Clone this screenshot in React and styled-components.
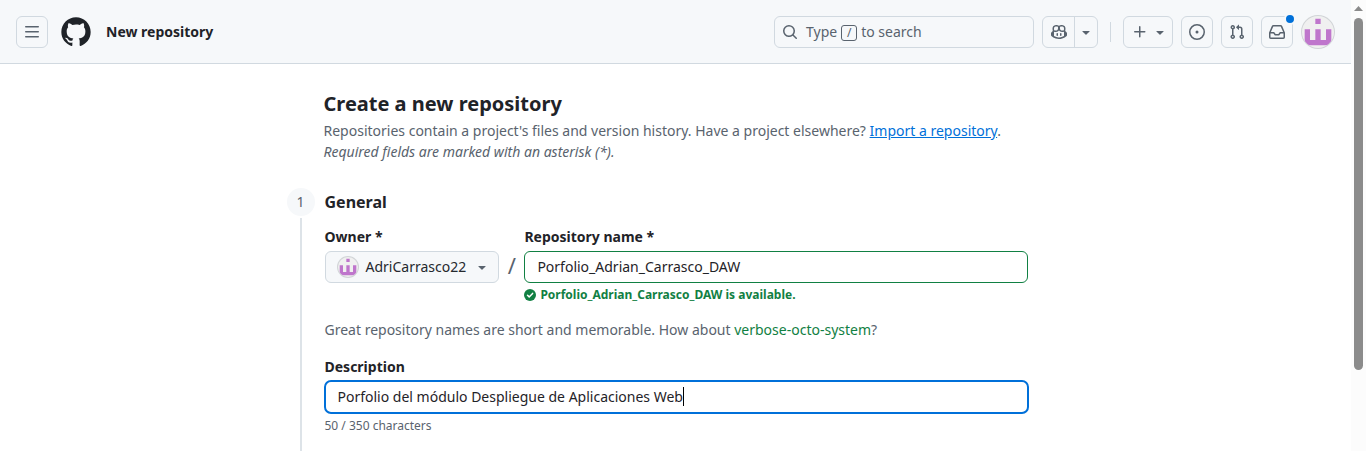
import React from 'react';
import styled, { createGlobalStyle, css } from 'styled-components';

const GlobalStyle = createGlobalStyle`
  *, *::before, *::after { box-sizing: border-box; }
  html, body { margin: 0; height: 451px; overflow: hidden; background: #fff; }
  body {
    font-family: "Noto Sans", sans-serif;
    font-size: 14px;
    line-height: 21px;
    color: #1f2328;
  }
  h1, h2, p { margin: 0; }
  svg { display: block; flex: none; }
`;

const ICONS = {
  menu: 'M1 2.75A.75.75 0 0 1 1.75 2h12.5a.75.75 0 0 1 0 1.5H1.75A.75.75 0 0 1 1 2.75Zm0 5A.75.75 0 0 1 1.75 7h12.5a.75.75 0 0 1 0 1.5H1.75A.75.75 0 0 1 1 7.75ZM1.75 12h12.5a.75.75 0 0 1 0 1.5H1.75a.75.75 0 0 1 0-1.5Z',
  search: 'M10.68 11.74a6 6 0 0 1-7.922-8.982 6 6 0 0 1 8.982 7.922l3.04 3.04a.749.749 0 0 1-.326 1.275.749.749 0 0 1-.734-.215ZM11.5 7a4.499 4.499 0 1 0-8.997 0A4.499 4.499 0 0 0 11.5 7Z',
  caret: 'm4.427 7.427 3.396 3.396a.25.25 0 0 0 .354 0l3.396-3.396A.25.25 0 0 0 11.396 7H4.604a.25.25 0 0 0-.177.427Z',
  plus: 'M7.75 2a.75.75 0 0 1 .75.75V7h4.25a.75.75 0 0 1 0 1.5H8.5v4.25a.75.75 0 0 1-1.5 0V8.5H2.75a.75.75 0 0 1 0-1.5H7V2.75A.75.75 0 0 1 7.75 2Z',
  issue: 'M8 9.5a1.5 1.5 0 1 0 0-3 1.5 1.5 0 0 0 0 3ZM8 0a8 8 0 1 1 0 16A8 8 0 0 1 8 0ZM1.5 8a6.5 6.5 0 1 0 13 0 6.5 6.5 0 0 0-13 0Z',
  pull: 'M1.5 3.25a2.25 2.25 0 1 1 3 2.122v5.256a2.251 2.251 0 1 1-1.5 0V5.372A2.25 2.25 0 0 1 1.5 3.25Zm5.677-.177L9.573.677A.25.25 0 0 1 10 .854V2.5h1A2.5 2.5 0 0 1 13.5 5v5.628a2.251 2.251 0 1 1-1.5 0V5a1 1 0 0 0-1-1h-1v1.646a.25.25 0 0 1-.427.177L7.177 3.427a.25.25 0 0 1 0-.354ZM3.75 2.5a.75.75 0 1 0 0 1.5.75.75 0 0 0 0-1.5Zm0 9.5a.75.75 0 1 0 0 1.5.75.75 0 0 0 0-1.5Zm8.25.75a.75.75 0 1 0 1.5 0 .75.75 0 0 0-1.5 0Z',
  inbox: 'M2.8 2.06A1.75 1.75 0 0 1 4.41 1h7.18c.7 0 1.333.417 1.61 1.06l2.74 6.395c.04.093.06.194.06.295v4.5A1.75 1.75 0 0 1 14.25 15H1.75A1.75 1.75 0 0 1 0 13.25v-4.5c0-.101.02-.202.06-.295Zm1.61.44a.25.25 0 0 0-.23.152L1.887 8H4.75a.75.75 0 0 1 .6.3L6.625 10h2.75l1.275-1.7a.75.75 0 0 1 .6-.3h2.863L11.82 2.652a.25.25 0 0 0-.23-.152Zm10.09 7h-2.875l-1.275 1.7a.75.75 0 0 1-.6.3h-3.5a.75.75 0 0 1-.6-.3L4.375 9.5H1.5v3.75c0 .138.112.25.25.25h12.5a.25.25 0 0 0 .25-.25Z',
  copilot: 'M7.998 15.035c-4.562 0-7.873-2.914-7.998-3.749V9.338c.085-.628.677-1.686 1.588-2.065.013-.07.024-.143.036-.218.029-.183.06-.384.126-.612-.201-.508-.254-1.084-.254-1.656 0-.87.128-1.769.693-2.484.579-.733 1.494-1.124 2.724-1.261 1.206-.134 2.262.034 2.944.765.05.053.096.108.139.165.044-.057.094-.112.143-.165.682-.731 1.738-.899 2.944-.765 1.23.137 2.145.528 2.724 1.261.566.715.693 1.614.693 2.484 0 .572-.053 1.148-.254 1.656.066.228.098.429.126.612.012.076.024.148.037.218.924.385 1.522 1.471 1.591 2.095v1.872c0 .766-3.351 3.795-8.002 3.795Zm0-1.485c2.28 0 4.584-1.11 5.002-1.433V7.862l-.023-.116c-.49.21-1.075.291-1.727.291-1.146 0-2.059-.327-2.71-.991A3.222 3.222 0 0 1 8 6.303a3.24 3.24 0 0 1-.544.743c-.65.664-1.563.991-2.71.991-.652 0-1.236-.081-1.727-.291l-.023.116v4.255c.419.323 2.722 1.433 5.002 1.433ZM6.762 2.83c-.193-.206-.637-.413-1.682-.297-1.019.113-1.479.404-1.713.7-.247.312-.369.789-.369 1.554 0 .793.129 1.171.308 1.371.162.181.519.379 1.442.379.853 0 1.339-.235 1.638-.54.315-.322.527-.827.617-1.553.117-.935-.037-1.395-.241-1.614Zm4.155-.297c-1.044-.116-1.488.091-1.681.297-.204.219-.359.679-.242 1.614.091.726.303 1.231.618 1.553.299.305.784.54 1.638.54.922 0 1.28-.198 1.442-.379.179-.2.308-.578.308-1.371 0-.765-.123-1.242-.37-1.554-.233-.296-.693-.587-1.713-.7ZM6.25 9.037a.75.75 0 0 1 .75.75v1.501a.75.75 0 0 1-1.5 0V9.787a.75.75 0 0 1 .75-.75Zm4.25.75v1.501a.75.75 0 0 1-1.5 0V9.787a.75.75 0 0 1 1.5 0Z',
  github: 'M12 1C5.923 1 1 5.923 1 12c0 4.867 3.149 8.979 7.521 10.436.55.096.756-.233.756-.522 0-.262-.013-1.128-.013-2.049-2.764.509-3.479-.674-3.699-1.292-.124-.317-.66-1.293-1.127-1.554-.385-.207-.936-.715-.014-.729.866-.014 1.485.797 1.691 1.128.99 1.663 2.571 1.196 3.204.907.096-.715.385-1.196.701-1.471-2.448-.275-5.005-1.224-5.005-5.432 0-1.196.426-2.186 1.128-2.956-.111-.275-.496-1.402.11-2.915 0 0 .921-.288 3.024 1.128a10.193 10.193 0 0 1 2.75-.371c.936 0 1.871.123 2.75.371 2.104-1.43 3.025-1.128 3.025-1.128.605 1.513.221 2.64.111 2.915.701.77 1.127 1.747 1.127 2.956 0 4.222-2.571 5.157-5.019 5.432.399.344.743 1.004.743 2.035 0 1.471-.014 2.654-.014 3.025 0 .289.206.632.756.522C19.851 20.979 23 16.854 23 12c0-6.077-4.922-11-11-11Z',
};

const Icon = ({ name, size = 16, box = 16 }) => (
  <svg width={size} height={size} viewBox={`0 0 ${box} ${box}`} fill="currentColor" aria-hidden="true">
    <path d={ICONS[name]} />
  </svg>
);

const CheckIcon = () => (
  <svg width="12" height="12" viewBox="0 0 12 12" aria-hidden="true">
    <circle cx="6" cy="6" r="6" fill="currentColor" />
    <path d="M3.5 6.2 5.2 7.9 8.6 4.4" fill="none" stroke="#fff" strokeWidth="1.5" strokeLinecap="round" strokeLinejoin="round" />
  </svg>
);

const AvatarFrame = styled.span`
  display: block;
  flex: none;
  width: ${(p) => p.$size}px;
  height: ${(p) => p.$size}px;
  border-radius: 50%;
  overflow: hidden;
  background: #f0f0f0;
  box-shadow: 0 0 0 1px #d1d4d7;
`;

const Avatar = ({ size }) => (
  <AvatarFrame $size={size}>
    <svg width={size} height={size} viewBox="0 0 32 32">
      <path
        fill="#bf76cc"
        d="M13.33 2.67h5.34V8h-5.34zM2.67 13.33H8V24h5.33V13.33h5.34V24H24V13.33h5.33v16H2.67z"
      />
    </svg>
  </AvatarFrame>
);

const Page = styled.div`
  display: flex;
  height: 451px;
  overflow: hidden;
`;

const Content = styled.div`
  flex: 1;
  min-width: 0;
`;

const Header = styled.header`
  display: flex;
  align-items: center;
  height: 64px;
  padding: 1px 17px 0 16px;
  background: #f6f8fa;
  border-bottom: 1px solid #d1d9e0;
`;

const controlBorder = css`
  border: 1px solid #d1d9e0;
  border-radius: 6px;
`;

const IconButton = styled.button`
  position: relative;
  display: flex;
  align-items: center;
  justify-content: center;
  width: 32px;
  height: 32px;
  padding: 0;
  background: transparent;
  color: #59636e;
  ${controlBorder}
`;

const CreateButton = styled(IconButton)`
  width: 50px;
  gap: 4px;
  padding-left: 4px;
`;

const Logo = styled.span`
  margin: 0 14px 0 12px;
`;

const PageName = styled.span`
  padding-bottom: 2px;
  font-weight: 700;
`;

const SearchBox = styled.div`
  display: flex;
  align-items: center;
  width: 260px;
  height: 32px;
  margin-left: auto;
  padding-left: 7px;
  color: #59636e;
  ${controlBorder}
`;

const SearchHint = styled.span`
  display: flex;
  align-items: center;
  margin-left: 8px;
  padding-bottom: 2px;
`;

const SlashKey = styled.kbd`
  display: flex;
  align-items: center;
  justify-content: center;
  width: 16px;
  height: 16px;
  margin: 4px 4px 0;
  border: 1px solid #59636e;
  border-radius: 3px;
  font: 12px/14px "Noto Sans", sans-serif;
`;

const SplitButton = styled.div`
  display: flex;
  width: 56px;
  height: 32px;
  margin-left: 8px;
  color: #59636e;
  ${controlBorder}
`;

const SplitPart = styled.span`
  display: flex;
  align-items: center;
  justify-content: center;
  width: ${(p) => p.$width}px;
  padding-left: ${(p) => p.$inset || 0}px;
  & + & { border-left: 1px solid #d1d9e0; }
`;

const Divider = styled.span`
  width: 1px;
  height: 20px;
  margin: 0 12px;
  background: #d1d9e0;
`;

const Actions = styled.div`
  display: flex;
  align-items: center;
  gap: 8px;
  margin-right: 9px;
`;

const UnreadDot = styled.span`
  position: absolute;
  top: -4px;
  right: -4px;
  width: 12px;
  height: 12px;
  border: 2px solid #f6f8fa;
  border-radius: 50%;
  background: #0070d9;
`;

const Main = styled.main`
  width: 776px;
  margin: 0 auto;
  padding-top: 25px;
`;

const Intro = styled.div`
  padding-left: 36px;
  color: #59636e;
`;

const Title = styled.h1`
  margin-bottom: 1px;
  font-size: 20px;
  line-height: 30px;
  font-weight: 700;
  color: #1f2328;
`;

const ImportLink = styled.a`
  color: #0070d9;
  text-decoration: underline;
`;

const Step = styled.section`
  display: flex;
  gap: 9.5px;
  margin: 26px 0 0 -0.5px;
`;

const StepRail = styled.div`
  display: flex;
  flex-direction: column;
  align-items: center;
  gap: 2px;
  width: 28px;
`;

const StepNumber = styled.span`
  width: 28px;
  height: 28px;
  padding-right: 1px;
  border-radius: 50%;
  background: #f6f8fa;
  color: #59636e;
  line-height: 28px;
  text-align: center;
`;

const StepLine = styled.span`
  width: 2px;
  height: 260px;
  background: #dde3e8;
`;

const StepBody = styled.div`
  width: 703.5px;
`;

const StepTitle = styled.h2`
  font-size: 16px;
  line-height: 28px;
  font-weight: 700;
`;

const FieldRow = styled.div`
  display: flex;
  margin-top: 10px;
`;

const Field = styled.div`
  display: flex;
  flex-direction: column;
  flex: ${(p) => (p.$grow ? 1 : 'none')};
  margin-top: ${(p) => p.$top || 0}px;
`;

const Label = styled.label`
  margin-bottom: 4px;
  font-weight: 700;
`;

const OwnerSelect = styled.button`
  display: flex;
  align-items: center;
  width: 174px;
  height: 32px;
  padding: 0 8px 0 12px;
  background: #f6f8fa;
  color: #25292e;
  font: inherit;
  ${controlBorder}
`;

const OwnerName = styled.span`
  flex: 1;
  margin-left: 8px;
  padding-bottom: 1px;
  text-align: left;
`;

const CaretSlot = styled.span`
  color: #59636e;
`;

const PathSlash = styled.span`
  align-self: flex-start;
  width: 25.9px;
  margin-top: 24px;
  padding-left: 1px;
  font-size: 22px;
  line-height: 30px;
  text-align: center;
  color: #59636e;
`;

const TextBox = styled.div`
  display: flex;
  align-items: center;
  height: 32px;
  padding: 0 12px 1px;
  border: 1px solid #118043;
  border-radius: 6px;
`;

const FocusedTextBox = styled(TextBox)`
  height: 34px;
  margin: -1px;
  border: 2px solid #0070d9;
  border-radius: 7px;
`;

const TextCursor = styled.span`
  width: 1px;
  height: 19px;
  background: #000;
`;

const Validation = styled.p`
  display: flex;
  align-items: center;
  gap: 4px;
  margin-top: 3px;
  font-size: 12px;
  line-height: 18px;
  font-weight: 700;
  color: #118043;
`;

const Suggestion = styled.p`
  margin-top: 15px;
  color: #59636e;
`;

const SuggestedName = styled.span`
  color: #118043;
`;

const Caption = styled.p`
  margin-top: 4px;
  font-size: 12px;
  line-height: 18px;
  color: #59636e;
`;

const ScrollTrack = styled.div`
  display: flex;
  flex-direction: column;
  align-items: center;
  width: 15px;
  padding-top: 6px;
  background: #fcfcfc;
`;

const ScrollThumb = styled.span`
  width: 9px;
  height: 352px;
  margin-top: 7px;
  border-radius: 5px;
  background: #8b8b8b;
`;

export default function App() {
  return (
    <>
      <GlobalStyle />
      <Page>
        <Content>
          <Header>
            <IconButton aria-label="Open menu"><Icon name="menu" /></IconButton>
            <Logo><Icon name="github" size={32} box={24} /></Logo>
            <PageName>New repository</PageName>
            <SearchBox>
              <Icon name="search" />
              <SearchHint>Type<SlashKey>/</SlashKey>to search</SearchHint>
            </SearchBox>
            <SplitButton>
              <SplitPart $width={31} $inset={1}><Icon name="copilot" /></SplitPart>
              <SplitPart $width={23}><Icon name="caret" /></SplitPart>
            </SplitButton>
            <Divider />
            <Actions>
              <CreateButton aria-label="Create new">
                <Icon name="plus" />
                <Icon name="caret" />
              </CreateButton>
              <IconButton aria-label="Issues"><Icon name="issue" /></IconButton>
              <IconButton aria-label="Pull requests"><Icon name="pull" /></IconButton>
              <IconButton aria-label="Notifications"><Icon name="inbox" /><UnreadDot /></IconButton>
            </Actions>
            <Avatar size={32} />
          </Header>
          <Main>
            <Intro>
              <Title>Create a new repository</Title>
              <p>
                Repositories contain a project's files and version history. Have a project elsewhere?{' '}
                <ImportLink>Import a repository</ImportLink>.
              </p>
              <p><em>Required fields are marked with an asterisk (*).</em></p>
            </Intro>
            <Step>
              <StepRail>
                <StepNumber>1</StepNumber>
                <StepLine />
              </StepRail>
              <StepBody>
                <StepTitle>General</StepTitle>
                <FieldRow>
                  <Field>
                    <Label>Owner *</Label>
                    <OwnerSelect>
                      <Avatar size={20} />
                      <OwnerName>AdriCarrasco22</OwnerName>
                      <CaretSlot><Icon name="caret" /></CaretSlot>
                    </OwnerSelect>
                  </Field>
                  <PathSlash>/</PathSlash>
                  <Field $grow>
                    <Label>Repository name *</Label>
                    <TextBox>Porfolio_Adrian_Carrasco_DAW</TextBox>
                    <Validation><CheckIcon />Porfolio_Adrian_Carrasco_DAW is available.</Validation>
                  </Field>
                </FieldRow>
                <Suggestion>
                  Great repository names are short and memorable. How about{' '}
                  <SuggestedName>verbose-octo-system</SuggestedName>?
                </Suggestion>
                <Field $top={16}>
                  <Label>Description</Label>
                  <FocusedTextBox>Porfolio del módulo Despliegue de Aplicaciones Web<TextCursor /></FocusedTextBox>
                  <Caption>50 / 350 characters</Caption>
                </Field>
              </StepBody>
            </Step>
          </Main>
        </Content>
        <ScrollTrack>
          <svg width="9" height="5" viewBox="0 0 9 5"><path d="M0 5 4.5 0 9 5z" fill="#8b8b8b" /></svg>
          <ScrollThumb />
        </ScrollTrack>
      </Page>
    </>
  );
}
